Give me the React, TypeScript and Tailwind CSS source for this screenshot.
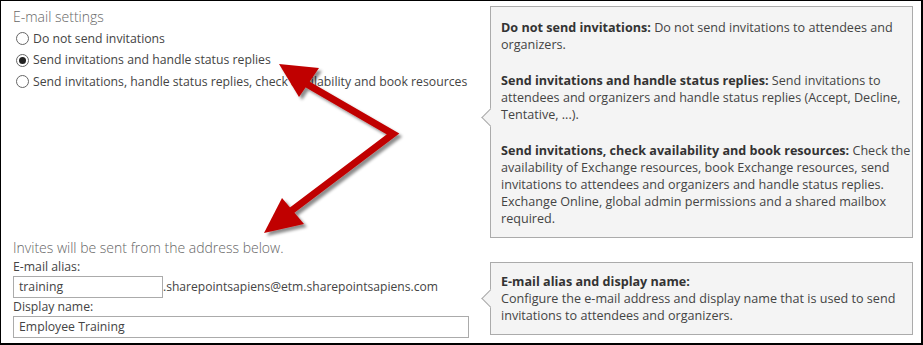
import React from 'react';

const Radio = ({ checked, label }: { checked?: boolean; label: string }) => (
  <label className="flex items-center h-[21.5px] pl-[3px] gap-[4px] text-[12.25px] text-[#444] whitespace-nowrap">
    <span className="w-[13px] h-[13px] rounded-full border border-[#666] bg-white flex items-center justify-center shrink-0">
      {checked && <span className="w-[7px] h-[7px] rounded-full bg-[#222]" />}
    </span>
    <span>{label}</span>
  </label>
);

const Callout = ({ arrowTop, className, children }: { arrowTop: string; className: string; children: React.ReactNode }) => (
  <div className={`relative border border-[#ababab] bg-[#f4f4f4] text-[12.6px] leading-[17px] text-[#444] whitespace-nowrap ${className}`}>
    <span className={`absolute -left-[7px] w-[13px] h-[13px] rotate-45 bg-[#f4f4f4] border-l border-b border-[#ababab] ${arrowTop}`} />
    {children}
  </div>
);

const Arrows = () => (
  <svg className="absolute inset-0 pointer-events-none" width="923" height="345">
    <defs>
      <filter id="shadow" x="-20%" y="-20%" width="140%" height="140%">
        <feDropShadow dx="3" dy="3" stdDeviation="1.6" floodColor="#000" floodOpacity="0.45" />
      </filter>
    </defs>
    <g filter="url(#shadow)" fill="#c00000">
      <polyline points="304,82 392,133 290,210" fill="none" stroke="#c00000" strokeWidth="7" strokeLinejoin="miter" />
      <polygon points="278,63 318,67 298,96" />
      <polygon points="263,232 281,197 303,223" />
    </g>
  </svg>
);

export default function App() {
  return (
    <div
      className="relative w-[923px] h-[345px] bg-white border-t border-l border-r-2 border-b-2 border-black overflow-hidden"
      style={{ fontFamily: '"Open Sans", "Noto Sans", sans-serif' }}
    >
      {/* top row */}
      <div className="flex pt-[5px]">
        <div className="w-[476px] pl-[12px]">
          <div className="text-[14px] leading-[22px] font-light text-[#666]">E-mail settings</div>
          <Radio label="Do not send invitations" />
          <Radio checked label="Send invitations and handle status replies" />
          <Radio label="Send invitations, handle status replies, check availability and book resources" />
        </div>
        <Callout arrowTop="top-[104px]" className="ml-[13px] w-[423px] h-[232px] pt-[12px] px-[10px]">
          <p className="mb-[19px]">
            <b className="text-[#333]">Do not send invitations:</b> Do not send invitations to attendees and
            <br />organizers.
          </p>
          <p className="mb-[19px]">
            <b className="text-[#333]">Send invitations and handle status replies:</b> Send invitations to
            <br />attendees and organizers and handle status replies (Accept, Decline,
            <br />Tentative, ...).
          </p>
          <p>
            <b className="text-[#333]">Send invitations, check availability and book resources:</b> Check the
            <br />availability of Exchange resources, book Exchange resources, send
            <br />invitations to attendees and organizers and handle status replies.
            <br />Exchange Online, global admin permissions and a shared mailbox
            <br />required.
          </p>
        </Callout>
      </div>

      {/* bottom row */}
      <div className="flex">
        <div className="w-[476px] pl-[12px]">
          <div className="text-[14px] leading-[20px] font-light text-[#666]">Invites will be sent from the address below.</div>
          <div className="text-[12.25px] leading-[18px] text-[#444]">E-mail alias:</div>
          <div className="flex items-center h-[22px]">
            <div className="w-[150px] h-[22px] border border-[#ababab] bg-white pl-[5px] text-[12.25px] leading-[20px] text-[#444]">training</div>
            <span className="text-[12.1px] text-[#444]">.sharepointsapiens@etm.sharepointsapiens.com</span>
          </div>
          <div className="text-[12.25px] leading-[18px] text-[#444]">Display name:</div>
          <div className="w-[456px] h-[22px] border border-[#ababab] bg-white pl-[5px] text-[12.25px] leading-[20px] text-[#444]">Employee Training</div>
        </div>
        <Callout arrowTop="top-[29px]" className="ml-[13px] mt-[24px] w-[423px] h-[73px] pt-[10px] px-[10px]">
          <b className="text-[#333]">E-mail alias and display name:</b>
          <br />Configure the e-mail address and display name that is used to send
          <br />invitations to attendees and organizers.
        </Callout>
      </div>

      <Arrows />
    </div>
  );
}
